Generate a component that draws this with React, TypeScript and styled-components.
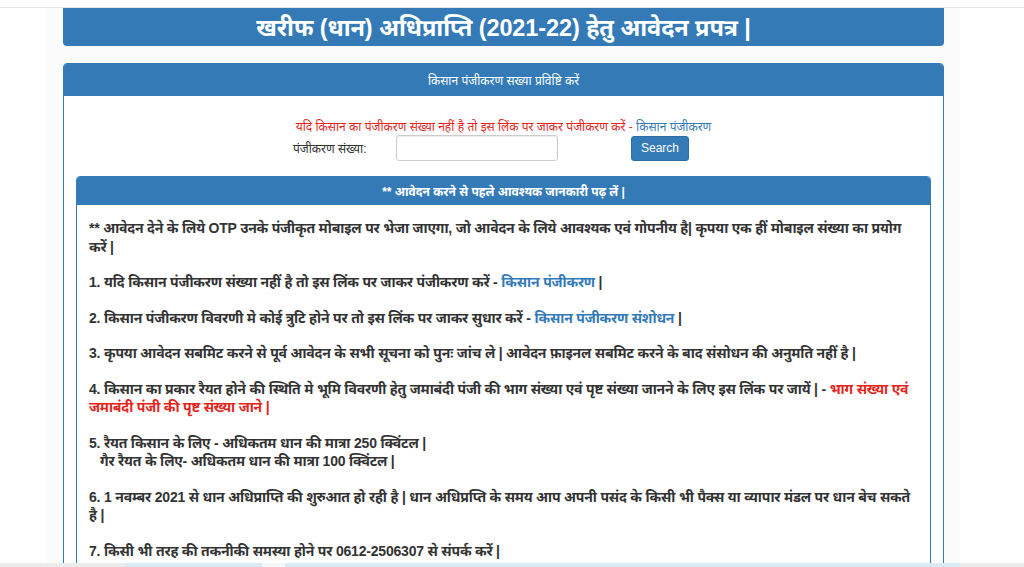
import React from 'react';
import styled, { createGlobalStyle } from 'styled-components';

const GlobalStyle = createGlobalStyle`
  html, body {
    margin: 0;
    padding: 0;
    background: #ffffff;
    font-family: "Liberation Sans", "Noto Sans", Arial, sans-serif;
    color: #333333;
  }
`;

const Page = styled.div`
  height: 567px;
  overflow: hidden;
  display: flex;
  flex-direction: column;
`;

const TopBar = styled.div`
  height: 7px;
  flex-shrink: 0;
  border-bottom: 1px solid #e4e4e4;
  background: #ffffff;
`;

const Container = styled.div`
  flex: 1;
  width: 913px;
  margin-left: 47px;
  padding: 0 16px;
  box-sizing: border-box;
  background: #fbfbfb;
  overflow: hidden;
`;

const TitleBox = styled.div`
  height: 38px;
  background: #337ab7;
  border-radius: 0 0 4px 4px;
  display: flex;
  align-items: center;
  justify-content: center;
`;

const Title = styled.h1`
  margin: 0;
  color: #ffffff;
  font-size: 23.5px;
  font-weight: bold;
  letter-spacing: -0.1px;
`;

const Panel = styled.div<{ $inner?: boolean }>`
  margin-top: ${p => (p.$inner ? '0' : '17px')};
  border: 1px solid #337ab7;
  border-radius: 4px;
  background: #ffffff;
  overflow: hidden;
`;

const PanelHeading = styled.div<{ $inner?: boolean }>`
  height: ${p => (p.$inner ? '28px' : '32px')};
  background: #337ab7;
  color: #ffffff;
  font-size: 12px;
  font-weight: ${p => (p.$inner ? 'bold' : 'normal')};
  display: flex;
  align-items: center;
  justify-content: center;
`;

const PanelBody = styled.div`
  padding: 23px 12px 0;
`;

const Notice = styled.div`
  text-align: center;
  color: #e3261d;
  font-size: 12px;
  line-height: 16px;
`;

const Link = styled.a<{ $red?: boolean }>`
  color: ${p => (p.$red ? '#e3261d' : '#337ab7')};
  text-decoration: none;
`;

const SearchRow = styled.div`
  display: flex;
  align-items: center;
  margin: 0 0 15px 217px;
  height: 26px;
`;

const Label = styled.label`
  width: 103px;
  font-size: 12px;
  color: #333333;
`;

const Input = styled.input`
  width: 162px;
  height: 26px;
  box-sizing: border-box;
  border: 1px solid #cccccc;
  border-radius: 3px;
  box-shadow: inset 0 1px 1px rgba(0, 0, 0, 0.075);
`;

const SearchButton = styled.button`
  margin-left: 73px;
  width: 58px;
  height: 25px;
  background: #337ab7;
  border: 1px solid #2e6da4;
  border-radius: 3px;
  color: #ffffff;
  font-family: "Liberation Sans", Arial, sans-serif;
  font-size: 12px;
`;

const InfoBody = styled.div`
  padding: 14px 12px 0;
  font-size: 14px;
  font-weight: bold;
  line-height: 18.5px;
  letter-spacing: -0.2px;
  color: #333333;
`;

const Para = styled.p`
  margin: 0 0 17px;
`;

const Indent = styled.span`
  display: inline-block;
  padding-left: 11px;
`;

const ScrollStrip = styled.div`
  height: 4px;
  flex-shrink: 0;
  display: flex;
`;

const Segment = styled.div<{ $w: number; $c: string }>`
  width: ${p => p.$w}px;
  background: ${p => p.$c};
`;

export default function App() {
  return (
    <Page>
      <GlobalStyle />
      <TopBar />
      <Container>
        <TitleBox>
          <Title>खरीफ (धान) अधिप्राप्ति (2021-22) हेतु आवेदन प्रपत्र |</Title>
        </TitleBox>

        <Panel>
          <PanelHeading>किसान पंजीकरण सख्या प्रविष्टि करें</PanelHeading>
          <PanelBody>
            <Notice>
              यदि किसान का पंजीकरण संख्या नहीं है तो इस लिंक पर जाकर पंजीकरण करें -{' '}
              <Link href="#">किसान पंजीकरण</Link>
            </Notice>
            <SearchRow>
              <Label>पंजीकरण संख्या:</Label>
              <Input type="text" />
              <SearchButton type="button">Search</SearchButton>
            </SearchRow>

            <Panel $inner>
              <PanelHeading $inner>** आवेदन करने से पहले आवश्यक जानकारी पढ़ लें |</PanelHeading>
              <InfoBody>
                <Para>
                  ** आवेदन देने के लिये OTP उनके पंजीकृत मोबाइल पर भेजा जाएगा, जो आवेदन के लिये आवश्यक एवं गोपनीय है| कृपया एक हीं मोबाइल संख्या का प्रयोग करें |
                </Para>
                <Para>
                  1. यदि किसान पंजीकरण संख्या नहीं है तो इस लिंक पर जाकर पंजीकरण करें -{' '}
                  <Link href="#">किसान पंजीकरण</Link> |
                </Para>
                <Para>
                  2. किसान पंजीकरण विवरणी मे कोई त्रुटि होने पर तो इस लिंक पर जाकर सुधार करें -{' '}
                  <Link href="#">किसान पंजीकरण संशोधन</Link> |
                </Para>
                <Para>
                  3. कृपया आवेदन सबमिट करने से पूर्व आवेदन के सभी सूचना को पुनः जांच ले | आवेदन फ़ाइनल सबमिट करने के बाद संसोधन की अनुमति नहीं है |
                </Para>
                <Para>
                  4. किसान का प्रकार रैयत होने की स्थिति मे भूमि विवरणी हेतु जमाबंदी पंजी की भाग संख्या एवं पृष्ट संख्या जानने के लिए इस लिंक पर जायें | -{' '}
                  <Link href="#" $red>भाग संख्या एवं जमाबंदी पंजी की पृष्ट संख्या जाने |</Link>
                </Para>
                <Para>
                  5. रैयत किसान के लिए - अधिकतम धान की मात्रा 250 क्विंटल |
                  <br />
                  <Indent>गैर रैयत के लिए- अधिकतम धान की मात्रा 100 क्विंटल |</Indent>
                </Para>
                <Para>
                  6. 1 नवम्बर 2021 से धान अधिप्राप्ति की शुरुआत हो रही है | धान अधिप्रप्ति के समय आप अपनी पसंद के किसी भी पैक्स या व्यापार मंडल पर धान बेच सकते है |
                </Para>
                <Para>7. किसी भी तरह की तकनीकी समस्या होने पर 0612-2506307 से संपर्क करें |</Para>
              </InfoBody>
            </Panel>
          </PanelBody>
        </Panel>
      </Container>
      <ScrollStrip>
        <Segment $w={125} $c="#ececec" />
        <Segment $w={137} $c="#dbe9f5" />
        <Segment $w={23} $c="#f4f8fb" />
        <Segment $w={675} $c="#dbe9f5" />
        <Segment $w={64} $c="#ececec" />
      </ScrollStrip>
    </Page>
  );
}
